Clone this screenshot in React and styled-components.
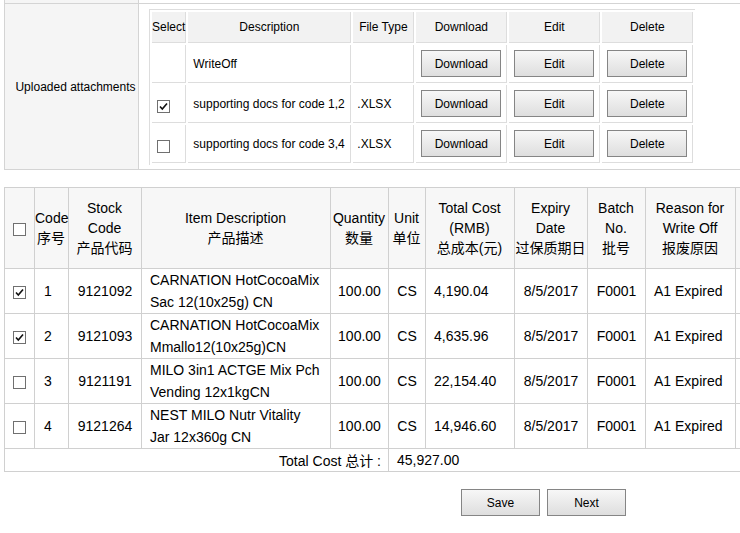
import React from "react"
import styled, { createGlobalStyle } from "styled-components"

const GlobalStyle = createGlobalStyle`
  html, body {
    margin: 0;
    padding: 0;
    overflow: hidden;
    background: #fff;
  }
  body {
    font-family: "Liberation Sans", Arial, "Noto Sans CJK SC", sans-serif;
    color: #000;
  }
`

const Page = styled.div`
  padding-left: 4px;
`

const FormTable = styled.table`
  border-collapse: collapse;
  table-layout: fixed;
  width: 820px;

  td {
    border: 1px solid #d4d4d4;
    padding: 0;
  }
`

const LabelCell = styled.td`
  background: #f5f5f5;
  font-size: 12px;
  text-align: center;
  vertical-align: middle;
  padding: ${({ $stub }) => ($stub ? "0" : "0 0 0 8px")} !important;
  ${({ $stub }) => $stub && "border-top: none !important; height: 3px;"}
`

const FieldCell = styled.td`
  background: #fff;
  padding: ${({ $stub }) => ($stub ? "0" : "5px 0 4px 10px")} !important;
  vertical-align: middle;
  ${({ $stub }) => $stub && "border-top: none !important; height: 3px;"}
`

const AttachTable = styled.table`
  border-collapse: separate;
  border-spacing: 2px;
  border-top: 1px solid #dddddd;
  border-left: 1px solid #dddddd;
  table-layout: fixed;
  font-size: 12px;

  td, th {
    border: none !important;
    border-right: 1px solid #dddddd !important;
    border-bottom: 1px solid #dddddd !important;
    padding: 0;
  }
`

const AttachHead = styled.th`
  background: #f2f2f2;
  font-weight: normal;
  height: 30px;
  text-align: center;
  white-space: nowrap;
`

const AttachCell = styled.td`
  height: 37px;
  text-align: ${({ $align }) => $align || "left"};
  padding: ${({ $pad }) => $pad || "0 5px"} !important;
  white-space: nowrap;
  vertical-align: middle;
`

const GreyButton = styled.button`
  width: ${({ $w }) => $w || 80}px;
  height: 27px;
  padding: 0;
  border: 1px solid #858585;
  border-radius: 0;
  background: linear-gradient(#f7f7f7, #dedede);
  font-family: "Liberation Sans", Arial, sans-serif;
  font-size: 12px;
  color: #000;
  cursor: pointer;
`

const ItemTable = styled.table`
  margin-top: 17px;
  border-collapse: collapse;
  table-layout: fixed;
  width: 811px;
  font-size: 14px;

  td, th {
    border: 1px solid #d0d0d0;
  }
`

const ItemHead = styled.th`
  background: #f7f7f7;
  font-weight: normal;
  line-height: 20px;
  height: 80px;
  padding: 0 1px 0 0;
  text-align: center;
  vertical-align: middle;
`

const ItemCell = styled.td`
  height: 44px;
  line-height: 22px;
  padding: ${({ $pad }) => $pad || "0"};
  text-align: ${({ $align }) => $align || "center"};
  vertical-align: middle;
  white-space: nowrap;
`

const TotalCell = styled.td`
  height: 22px;
  padding: ${({ $right }) => ($right ? "0 7px 0 0" : "0 0 0 8px")};
  text-align: ${({ $right }) => ($right ? "right" : "left")};
  vertical-align: middle;
`

const Box = styled.span`
  display: inline-block;
  box-sizing: border-box;
  width: 13px;
  height: 13px;
  border: 1px solid #707070;
  background: #fff;
  vertical-align: middle;
  position: relative;
  top: ${({ $shift }) => $shift || 0}px;

  svg {
    position: absolute;
    left: 0;
    top: 0;
  }
`

const Actions = styled.div`
  display: flex;
  gap: 7px;
  margin: 17px 0 0 457px;
`

const Check = ({ checked, shift }) => (
  <Box $shift={shift}>
    {checked && (
      <svg width="11" height="11" viewBox="0 0 11 11">
        <polyline
          points="2,5.5 4.3,8 9,2.5"
          fill="none"
          stroke="#111"
          strokeWidth="1.6"
        />
      </svg>
    )}
  </Box>
)

const attachments = [
  { desc: "WriteOff", type: "", box: false },
  { desc: "supporting docs for code 1,2", type: ".XLSX", box: true, checked: true },
  { desc: "supporting docs for code 3,4", type: ".XLSX", box: true, checked: false },
]

const items = [
  { checked: true, code: 1, stock: "9121092", desc: ["CARNATION HotCocoaMix", "Sac 12(10x25g) CN"], cost: "4,190.04" },
  { checked: true, code: 2, stock: "9121093", desc: ["CARNATION HotCocoaMix", "Mmallo12(10x25g)CN"], cost: "4,635.96" },
  { checked: false, code: 3, stock: "9121191", desc: ["MILO 3in1 ACTGE Mix Pch", "Vending 12x1kgCN"], cost: "22,154.40" },
  { checked: false, code: 4, stock: "9121264", desc: ["NEST MILO Nutr Vitality", "Jar 12x360g CN"], cost: "14,946.60" },
]

const itemCols = [30, 34, 73, 189, 58, 37, 89, 73, 58, 90, 80]

export default function App() {
  return (
    <>
      <GlobalStyle />
      <Page>
        <FormTable>
          <colgroup>
            <col style={{ width: 134 }} />
            <col />
          </colgroup>
          <tbody>
            <tr>
              <LabelCell $stub />
              <FieldCell $stub />
            </tr>
            <tr>
              <LabelCell>Uploaded attachments</LabelCell>
              <FieldCell>
                <AttachTable>
                  <colgroup>
                    <col style={{ width: 34 }} />
                    <col style={{ width: 163 }} />
                    <col style={{ width: 61 }} />
                    <col style={{ width: 91 }} />
                    <col style={{ width: 91 }} />
                    <col style={{ width: 91 }} />
                  </colgroup>
                  <thead>
                    <tr>
                      <AttachHead>Select</AttachHead>
                      <AttachHead>Description</AttachHead>
                      <AttachHead>File Type</AttachHead>
                      <AttachHead>Download</AttachHead>
                      <AttachHead>Edit</AttachHead>
                      <AttachHead>Delete</AttachHead>
                    </tr>
                  </thead>
                  <tbody>
                    {attachments.map((a) => (
                      <tr key={a.desc}>
                        <AttachCell $pad="0 0 0 5px">
                          {a.box && <Check checked={a.checked} shift={2} />}
                        </AttachCell>
                        <AttachCell>{a.desc}</AttachCell>
                        <AttachCell $pad="0 4px">{a.type}</AttachCell>
                        <AttachCell $align="center" $pad="0">
                          <GreyButton>Download</GreyButton>
                        </AttachCell>
                        <AttachCell $align="center" $pad="0">
                          <GreyButton>Edit</GreyButton>
                        </AttachCell>
                        <AttachCell $align="center" $pad="0">
                          <GreyButton>Delete</GreyButton>
                        </AttachCell>
                      </tr>
                    ))}
                  </tbody>
                </AttachTable>
              </FieldCell>
            </tr>
          </tbody>
        </FormTable>

        <ItemTable>
          <colgroup>
            {itemCols.map((w, i) => (
              <col key={i} style={{ width: w }} />
            ))}
          </colgroup>
          <thead>
            <tr>
              <ItemHead>
                <Check />
              </ItemHead>
              <ItemHead>Code<br />序号</ItemHead>
              <ItemHead>Stock<br />Code<br />产品代码</ItemHead>
              <ItemHead>Item Description<br />产品描述</ItemHead>
              <ItemHead>Quantity<br />数量</ItemHead>
              <ItemHead>Unit<br />单位</ItemHead>
              <ItemHead>Total Cost<br />(RMB)<br />总成本(元)</ItemHead>
              <ItemHead>Expiry<br />Date<br />过保质期日</ItemHead>
              <ItemHead>Batch<br />No.<br />批号</ItemHead>
              <ItemHead>Reason for<br />Write Off<br />报废原因</ItemHead>
              <ItemHead />
            </tr>
          </thead>
          <tbody>
            {items.map((it) => (
              <tr key={it.code}>
                <ItemCell>
                  <Check checked={it.checked} />
                </ItemCell>
                <ItemCell $align="left" $pad="0 0 0 9px">{it.code}</ItemCell>
                <ItemCell>{it.stock}</ItemCell>
                <ItemCell $align="left" $pad="0 0 0 8px">
                  {it.desc[0]}
                  <br />
                  {it.desc[1]}
                </ItemCell>
                <ItemCell>100.00</ItemCell>
                <ItemCell>CS</ItemCell>
                <ItemCell $align="left" $pad="0 0 0 8px">{it.cost}</ItemCell>
                <ItemCell>8/5/2017</ItemCell>
                <ItemCell>F0001</ItemCell>
                <ItemCell $align="left" $pad="0 0 0 8px">A1 Expired</ItemCell>
                <ItemCell />
              </tr>
            ))}
            <tr>
              <TotalCell colSpan={5} $right>Total Cost 总计 :</TotalCell>
              <TotalCell colSpan={6}>45,927.00</TotalCell>
            </tr>
          </tbody>
        </ItemTable>

        <Actions>
          <GreyButton $w={79}>Save</GreyButton>
          <GreyButton $w={79}>Next</GreyButton>
        </Actions>
      </Page>
    </>
  )
}
